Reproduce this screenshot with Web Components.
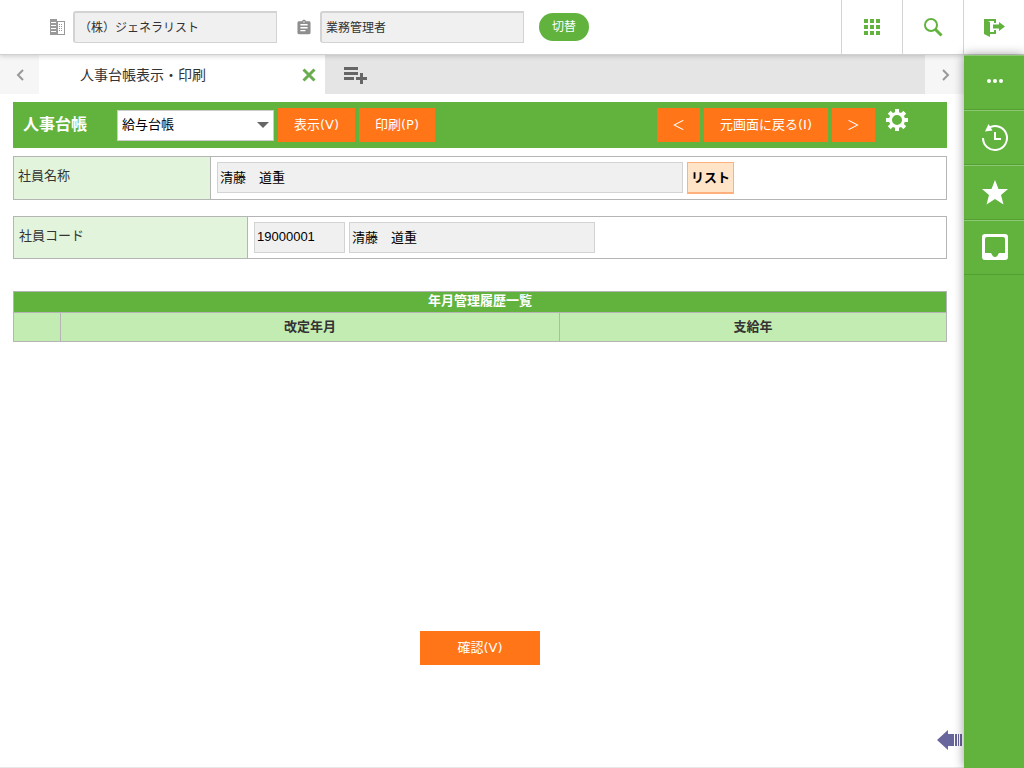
<!DOCTYPE html>
<html lang="ja">
<head>
<meta charset="utf-8">
<meta name="viewport" content="width=device-width, initial-scale=1">
<title>人事台帳表示・印刷</title>
<style>
  :root {
    --green: #61b33d;
    --orange: #ff7518;
    --line: #b5b5b5;
    --ui-font: "DejaVu Sans", "Noto Sans CJK JP", sans-serif;
    --field-font: "Liberation Sans", "Noto Sans CJK JP", sans-serif;
  }
  body {
    margin: 0;
    color: #333;
    background: #fff;
    font: 13px/20px var(--ui-font);
  }
</style>
</head>
<body>
<app-shell>
  <app-header slot="header">
    <header-field icon="company" label="会社" value="（株）ジェネラリスト"></header-field>
    <header-field icon="role" label="権限" value="業務管理者"></header-field>
    <pill-button>切替</pill-button>
  </app-header>
  <tab-strip slot="tabs">人事台帳表示・印刷</tab-strip>

  <ledger-toolbar>
    <span slot="title">人事台帳</span>
    <ledger-select></ledger-select>
    <action-button>表示(V)</action-button>
    <action-button>印刷(P)</action-button>
    <action-button slot="nav" arrow>＜</action-button>
    <action-button slot="nav">元画面に戻る(I)</action-button>
    <action-button slot="nav" arrow>＞</action-button>
  </ledger-toolbar>

  <name-row></name-row>
  <code-row></code-row>
  <history-table></history-table>
  <action-button class="confirm" wide>確認(V)</action-button>

  <side-rail slot="rail"></side-rail>
  <drawer-handle slot="handle"></drawer-handle>
</app-shell>

<script>
  // Small helper: every element gets an open shadow root with its own markup
  function define(name, html, setup) {
    customElements.define(
      name,
      class extends HTMLElement {
        constructor() {
          super();
          this.attachShadow({ mode: "open" });
        }
        connectedCallback() {
          this.shadowRoot.innerHTML =
            "<style>*{box-sizing:border-box} button{font:inherit;cursor:pointer}</style>" +
            html;
          if (setup) setup(this, this.shadowRoot);
        }
      }
    );
  }

  const icons = {
    company: `
      <svg width="16" height="16" viewBox="0 0 16 16" fill="#999">
        <path fill-rule="evenodd" d="M1 0h7v16H1zM2 3h5v1H2zM2 6h5v1H2zM2 9h5v1H2zM2 12h5v1H2z"/>
        <path fill-rule="evenodd" d="M8 2h8v14H8zM9 3v12h6V3z"/>
        <path d="M10 5h1v1h-1zM12 5h1v1h-1zM10 7h1v1h-1zM12 7h1v1h-1zM10 9h1v1h-1zM12 9h1v1h-1zM10 11h1v1h-1zM12 11h1v1h-1z"/>
      </svg>`,
    role: `
      <svg width="16" height="16" viewBox="1 0 22 22" fill="#8e8e8e">
        <path d="M19 3h-4.180C14.400 1.840 13.300 1 12 1c-1.300 0-2.400.840-2.820 2H5c-1.100 0-2 .900-2 2v14c0 1.100.900 2 2 2h14c1.100 0 2-.900 2-2V5c0-1.100-.900-2-2-2zm-7 0c.550 0 1 .450 1 1s-.450 1-1 1-1-.450-1-1 .450-1 1-1zm2 14H7v-2h7v2zm3-4H7v-2h10v2zm0-4H7V7h10v2z"/>
      </svg>`,
  };

  define(
    "app-shell",
    `<style>
      :host {
        display: grid;
        grid-template: auto auto 1fr / minmax(0, 1fr) 60px;
        min-height: 100vh;
      }
      .header { grid-area: 1 / 1 / 2 / 3; z-index: 1; }
      .rail { grid-area: 2 / 2 / 4 / 3; z-index: 2; }
      .tabs { grid-area: 2 / 1 / 3 / 2; }
      main {
        grid-area: 3 / 1 / 4 / 2;
        position: relative;
        display: flex;
        flex-direction: column;
        padding: 8px 17px 8px 13px;
        border-bottom: 1px solid #e8e8e8;
      }
      .handle { position: absolute; right: 2px; bottom: 16px; }
      ::slotted(name-row) { margin-top: 8px; }
      ::slotted(code-row) { margin-top: 16px; }
      ::slotted(history-table) { margin-top: 32px; min-height: 340px; }
      ::slotted(.confirm) { align-self: center; }
    </style>
    <div class="header"><slot name="header"></slot></div>
    <div class="tabs"><slot name="tabs"></slot></div>
    <main>
      <slot></slot>
      <div class="handle"><slot name="handle"></slot></div>
    </main>
    <aside class="rail"><slot name="rail"></slot></aside>`
  );

  define(
    "app-header",
    `<style>
      :host {
        display: flex;
        justify-content: space-between;
        height: 55px;
        background: #fff;
        border-bottom: 1px solid #d0d0d0;
        box-shadow: 0 1px 5px rgba(0, 0, 0, .18);
        box-sizing: border-box;
      }
      .fields { display: flex; align-items: center; gap: 19px; padding-left: 49px; }
      ::slotted(pill-button) { margin-left: -4px; }
      nav { display: flex; }
      nav button {
        display: grid;
        place-items: center;
        width: 61px;
        padding: 0;
        border: 0;
        border-left: 1px solid #d4d4d4;
        background: none;
      }
    </style>
    <div class="fields"><slot></slot></div>
    <nav>
      <button aria-label="メニュー">
        <svg width="24" height="24" viewBox="0 0 24 24" fill="#61b33d">
          <path d="M4 4h4v4H4zM10 4h4v4h-4zM16 4h4v4h-4zM4 10h4v4H4zM10 10h4v4h-4zM16 10h4v4h-4zM4 16h4v4H4zM10 16h4v4h-4zM16 16h4v4h-4z"/>
        </svg>
      </button>
      <button aria-label="検索">
        <svg width="24" height="24" viewBox="0 0 24 24" fill="none" stroke="#61b33d">
          <circle cx="10" cy="10" r="6" stroke-width="2"/>
          <path d="M14.500 14.500l6 6" stroke-width="3"/>
        </svg>
      </button>
      <button aria-label="ログアウト">
        <svg width="24" height="24" viewBox="0 0 24 24" fill="#61b33d">
          <path d="M2 4h12v4h-2V6H6l2 1v10h4v-2h2v4H8v3l-6-3z"/>
          <path d="M11 9.500h6V7l6 4.500-6 4.500v-2.500h-6z"/>
        </svg>
      </button>
    </nav>`
  );

  define(
    "header-field",
    `<style>
      :host { display: block; }
      label { display: flex; align-items: center; gap: 8px; }
      input {
        width: 204px;
        height: 32px;
        padding: 0 4px 2px;
        border: 1px solid #d3d3d3;
        border-top-width: 2px;
        border-left-width: 2px;
        border-radius: 3px 0 0 3px;
        background: #f0f0f0;
        color: #333;
        font: 12px/20px var(--ui-font);
      }
    </style>
    <label><input readonly></label>`,
    (host, root) => {
      const input = root.querySelector("input");
      input.value = host.getAttribute("value");
      input.setAttribute("aria-label", host.getAttribute("label"));
      input.insertAdjacentHTML("beforebegin", icons[host.getAttribute("icon")]);
    }
  );

  define(
    "pill-button",
    `<style>
      :host { display: block; }
      button {
        display: block;
        width: 50px;
        height: 28px;
        padding: 0;
        border: 0;
        border-radius: 14px;
        background: var(--green);
        color: #fff;
        font-size: 12px;
      }
    </style>
    <button><slot></slot></button>`
  );

  define(
    "tab-strip",
    `<style>
      :host { display: flex; height: 39px; background: #e5e5e5; }
      button { display: grid; place-items: center; padding: 0; border: 0; background: none; }
      .arrow { width: 39px; background: #f6f6f6; }
      .tab {
        display: flex;
        align-items: center;
        justify-content: space-between;
        width: 286px;
        padding: 0 8px 0 41px;
        background: #fff;
        font-size: 14px;
      }
      .add { width: 60px; }
      .next { margin-left: auto; }
    </style>
    <button class="arrow" aria-label="前のタブ">
      <svg width="16" height="16" viewBox="0 0 16 16" fill="none" stroke="#999" stroke-width="2"><path d="M11 3L6 8l5 5"/></svg>
    </button>
    <div class="tab">
      <slot></slot>
      <button aria-label="閉じる">
        <svg width="16" height="16" viewBox="0 0 16 16" stroke="#6aad50" stroke-width="3"><path d="M2.500 2.500l11 11M13.500 2.500l-11 11"/></svg>
      </button>
    </div>
    <button class="add" aria-label="タブを追加">
      <svg width="24" height="20" viewBox="0 0 24 20" fill="#666">
        <path d="M1 2h14v3H1zM1 7h14v3H1zM1 12h10v3H1zM17 8h3v4h4v3h-4v4h-3v-4h-4v-3h4z"/>
      </svg>
    </button>
    <button class="arrow next" aria-label="次のタブ">
      <svg width="16" height="16" viewBox="0 0 16 16" fill="none" stroke="#999" stroke-width="2"><path d="M6 3l5 5-5 5"/></svg>
    </button>`
  );

  define(
    "action-button",
    `<style>
      :host { display: block; }
      button {
        display: block;
        height: 34px;
        padding: 0 16px;
        border: 0;
        background: var(--orange);
        color: #fff;
        white-space: nowrap;
      }
      :host([arrow]) button { padding: 0 15px; }
      :host([wide]) button { width: 120px; }
    </style>
    <button><slot></slot></button>`
  );

  define(
    "ledger-select",
    `<style>
      :host { display: grid; align-items: center; width: 157px; }
      select, svg { grid-area: 1 / 1; }
      select {
        appearance: none;
        width: 100%;
        height: 31px;
        padding: 0 4px;
        border: 1px solid #ccc;
        border-radius: 0;
        background: #fff;
        color: #000;
        font: 13px/20px var(--field-font);
      }
      svg { justify-self: end; margin-right: 5px; pointer-events: none; }
    </style>
    <select aria-label="台帳"><option>給与台帳</option></select>
    <svg width="12" height="6" viewBox="0 0 12 6"><path d="M0 0h12L6 6z" fill="#666"/></svg>`
  );

  define(
    "ledger-toolbar",
    `<style>
      :host {
        display: flex;
        justify-content: space-between;
        padding: 6px 38px 6px 10px;
        background: var(--green);
      }
      .group { display: flex; align-items: center; gap: 4px; }
      h1 {
        width: 90px;
        margin: 0;
        color: #fff;
        font-size: 16px;
        line-height: 20px;
      }
      .gear {
        align-self: flex-start;
        margin-left: 6px;
        padding: 0;
        border: 0;
        background: none;
      }
      svg { display: block; }
    </style>
    <div class="group"><h1><slot name="title"></slot></h1><slot></slot></div>
    <div class="group">
      <slot name="nav"></slot>
      <button class="gear" aria-label="設定">
        <svg width="24" height="24" viewBox="-12 -12 24 24">
          <g fill="#fff">
            <path d="M-2-11h4v5h-4zM-2 11h4v-5h-4zM-11-2v4h5v-4zM11-2v4h-5v-4z"/>
            <path transform="rotate(45)" d="M-2-11h4v5h-4zM-2 11h4v-5h-4zM-11-2v4h5v-4zM11-2v4h-5v-4z"/>
          </g>
          <circle r="6.500" fill="#61b33d" stroke="#fff" stroke-width="3"/>
        </svg>
      </button>
    </div>`
  );

  // Shared look of the two employee rows
  const rowStyle = `
    :host { display: flex; border: 1px solid var(--line); }
    label {
      flex: none;
      padding: 9px 4px;
      border-right: 1px solid var(--line);
      background: #e2f5dc;
    }
    .cell { display: flex; flex: 1; align-items: flex-start; gap: 4px; min-width: 0; padding: 5px 6px; }
    input {
      min-width: 0;
      height: 31px;
      padding: 0 2px 2px;
      border: 1px solid #d3d3d3;
      background: #f0f0f0;
      color: #000;
      font: 13px/20px var(--field-font);
    }`;

  define(
    "name-row",
    `<style>${rowStyle}
      label { width: 197px; }
      input { flex: 0 1 466px; }
      button {
        height: 32px;
        width: 47px;
        padding: 0;
        border: 1px solid #ffb07c;
        border-bottom-width: 2px;
        background: #ffe4c8;
        color: #000;
        font-weight: bold;
      }
    </style>
    <label for="name">社員名称</label>
    <div class="cell">
      <input id="name" value="清藤　道重" readonly>
      <button>リスト</button>
    </div>`
  );

  define(
    "code-row",
    `<style>${rowStyle}
      label { width: 234px; padding-left: 5px; }
      #code { flex: 0 1 91px; }
      #employee { flex: 0 1 246px; }
    </style>
    <label for="code">社員コード</label>
    <div class="cell">
      <input id="code" value="19000001" readonly>
      <input id="employee" aria-label="社員名" value="清藤　道重" readonly>
    </div>`
  );

  define(
    "history-table",
    `<style>
      :host { display: block; }
      table { width: 100%; border-collapse: collapse; table-layout: fixed; }
      caption {
        height: 21px;
        border: 1px solid var(--line);
        border-bottom: 0;
        background: var(--green);
        color: #fff;
        font-weight: bold;
        line-height: 18px;
      }
      th { height: 29px; padding: 0; border: 1px solid var(--line); background: #c3ecb2; }
      .mark { width: 47px; }
      .month { width: 499px; }
    </style>
    <table>
      <caption>年月管理履歴一覧</caption>
      <colgroup><col class="mark"><col class="month"><col></colgroup>
      <thead><tr><th></th><th scope="col">改定年月</th><th scope="col">支給年</th></tr></thead>
    </table>`
  );

  define(
    "side-rail",
    `<style>
      :host {
        display: block;
        height: 100%;
        background: var(--green);
        box-shadow: 0 0 10px rgba(0, 0, 0, .4);
      }
      nav { display: flex; flex-direction: column; }
      button {
        display: grid;
        place-items: center;
        height: 55px;
        padding: 0 0 0 2px;
        border: 0;
        border-top: 1px solid #8dc973;
        border-bottom: 1px solid #539f32;
        background: none;
      }
    </style>
    <nav>
      <button aria-label="その他">
        <svg width="28" height="28" viewBox="0 0 28 28" fill="#fff"><circle cx="8" cy="12" r="2"/><circle cx="14" cy="12" r="2"/><circle cx="20" cy="12" r="2"/></svg>
      </button>
      <button aria-label="履歴">
        <svg width="28" height="28" viewBox="0 0 28 28" fill="none" stroke="#fff" stroke-width="2">
          <path d="M2 14a12 12 0 1 0 6-10.400M14 8v7h6"/>
          <path d="M4 7.500L7.500 0l4 6.500z" fill="#fff" stroke="none"/>
        </svg>
      </button>
      <button aria-label="お気に入り">
        <svg width="28" height="28" viewBox="0 0 28 28" fill="#fff"><path d="M14 1l3.500 9H27l-7 6 2.500 9.500L14 20l-8.500 5.500L8 16l-7-6h9.500z"/></svg>
      </button>
      <button aria-label="受信箱">
        <svg width="28" height="28" viewBox="0 0 28 28">
          <path fill="#fff" fill-rule="evenodd" d="M4 0h20a3 3 0 0 1 3 3v20a3 3 0 0 1-3 3H4a3 3 0 0 1-3-3V3a3 3 0 0 1 3-3zM6 3a2 2 0 0 0-2 2v14h5.500c1.500 0 1.500 4 4.500 4s3-4 4.500-4H24V5a2 2 0 0 0-2-2z"/>
        </svg>
      </button>
    </nav>`
  );

  define(
    "drawer-handle",
    `<style>
      :host { display: block; }
      button { display: block; padding: 0; border: 0; background: none; }
      svg { display: block; }
    </style>
    <button aria-label="開く">
      <svg width="25" height="22" viewBox="0 0 25 22" fill="#69659d">
        <path d="M0 11L11 1v4h6v12h-6v4zM18 5h2v12h-2zM21 5h1v12h-1zM23 5h2v12h-2z"/>
      </svg>
    </button>`
  );
</script>
</body>
</html>
